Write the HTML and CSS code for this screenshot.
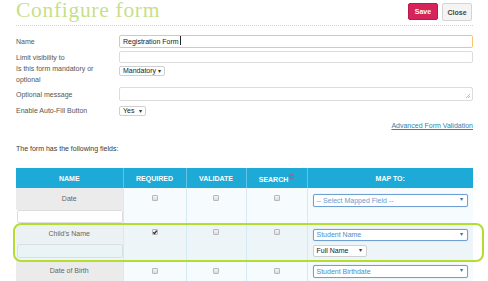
FILE: index.html
```html
<!DOCTYPE html>
<html lang="en">
<head>
<meta charset="utf-8">
<title>Configure form</title>
<link rel="stylesheet" href="styles.css">
</head>
<body>
<div class="page">
  <header class="top">
    <h1 class="title">Configure form</h1>
    <div class="actions">
      <button class="btn btn-save">Save</button>
      <button class="btn btn-close">Close</button>
    </div>
  </header>

  <div class="settings">
    <div class="row r1">
      <label class="lbl">Name</label>
      <div class="field focus">Registration Form<span class="caret"></span></div>
    </div>
    <div class="row r2">
      <label class="lbl">Limit visibility to</label>
      <div class="field h12"></div>
    </div>
    <div class="row r3">
      <label class="lbl two">Is this form mandatory or<br>optional</label>
      <div class="dd dd-mand">Mandatory<span class="arr">▾</span></div>
    </div>
    <div class="row r4">
      <label class="lbl">Optional message</label>
      <div class="field area"><span class="grip"></span></div>
    </div>
    <div class="row r5">
      <label class="lbl">Enable Auto-Fill Button</label>
      <div class="dd dd-yes">Yes<span class="arr">▾</span></div>
    </div>
  </div>

  <div class="link-row"><a class="adv" href="#">Advanced Form Validation</a></div>
  <p class="intro">The form has the following fields:</p>

  <div class="table-wrap">
    <table class="fields">
      <colgroup>
        <col class="c-name"><col class="c-req"><col class="c-val"><col class="c-search"><col class="c-map">
      </colgroup>
      <thead>
        <tr>
          <th>NAME</th>
          <th>REQUIRED</th>
          <th>VALIDATE</th>
          <th>SEARCH<svg class="info" width="5" height="5" viewBox="0 0 10 10"><circle cx="5" cy="5" r="4" fill="none" stroke="#e0415a" stroke-width="1.6"/><rect x="4.2" y="2.4" width="1.6" height="3.4" fill="#e0415a"/><rect x="4.2" y="6.6" width="1.6" height="1.4" fill="#e0415a"/></svg></th>
          <th>MAP TO:</th>
        </tr>
      </thead>
      <tbody>
        <tr class="row-date">
          <td class="name">
            <div class="nlabel">Date</div>
            <div class="ninput"></div>
          </td>
          <td class="chk"><span class="cb"></span></td>
          <td class="chk"><span class="cb"></span></td>
          <td class="chk"><span class="cb"></span></td>
          <td class="map"><div class="mdd placeholder">-- Select Mapped Field --<span class="arr">▾</span></div></td>
        </tr>
        <tr class="row-child">
          <td class="name">
            <div class="nlabel">Child's Name</div>
            <div class="ninput"></div>
          </td>
          <td class="chk"><span class="cb checked"><svg width="6" height="6" viewBox="0 0 6 6"><path d="M1.2 3.4 L2.4 4.6 L4.8 1.6" fill="none" stroke="#222" stroke-width="1.2"/></svg></span></td>
          <td class="chk"><span class="cb"></span></td>
          <td class="chk"><span class="cb"></span></td>
          <td class="map">
            <div class="mdd">Student Name<span class="arr">▾</span></div>
            <div class="sub-dd">Full Name<span class="arr">▾</span></div>
          </td>
        </tr>
        <tr class="row-dob">
          <td class="name">
            <div class="nlabel">Date of Birth</div>
          </td>
          <td class="chk"><span class="cb"></span></td>
          <td class="chk"><span class="cb"></span></td>
          <td class="chk"><span class="cb"></span></td>
          <td class="map"><div class="mdd">Student Birthdate<span class="arr">▾</span></div></td>
        </tr>
      </tbody>
    </table>
    <div class="highlight"></div>
  </div>
</div>
</body>
</html>
```

FILE: styles.css
```css
* { box-sizing: border-box; }
html, body {
  margin: 0;
  padding: 0;
  background: #fff;
}
body {
  width: 488px;
  height: 281px;
  overflow: hidden;
  font-family: "Liberation Sans", Arial, sans-serif;
  font-size: 7px;
  color: #555;
}
.page {
  padding: 0 15px 0 16px;
}

/* header */
.top {
  display: flex;
  justify-content: space-between;
  align-items: flex-start;
  height: 26px;
  border-bottom: 1px dotted #d2d2d2;
}
.title {
  margin: 0;
  font-family: "Liberation Serif", "Times New Roman", serif;
  font-weight: normal;
  font-size: 21.5px;
  line-height: 20px;
  letter-spacing: 0.7px;
  color: #c6df8a;
}
.actions {
  display: flex;
  gap: 4px;
  margin-top: 3px;
  margin-right: 1px;
}
.btn {
  width: 30px;
  height: 17px;
  padding: 0;
  border-radius: 2px;
  font-family: "Liberation Sans", Arial, sans-serif;
  font-size: 7px;
  font-weight: bold;
  cursor: pointer;
}
.btn-save {
  background: #d6245a;
  border: 1px solid #b81b4b;
  color: #fff;
}
.btn-close {
  height: 18px;
  background: #f4f4f4;
  border: 1px solid #d4d4d4;
  color: #444;
}

/* settings form */
.settings {
  margin-top: 9px;
}
.row {
  display: flex;
  align-items: center;
}
.lbl {
  width: 103px;
  flex: none;
  line-height: 11px;
  color: #555;
}
.lbl.two {
  align-self: flex-start;
  margin-top: -3px;
}
.r2 { margin-top: 3px; }
.r3 { margin-top: 3px; align-items: flex-start; }
.r4 { margin-top: 2px; }
.r5 { margin-top: 4px; }

.field {
  flex: 1;
  height: 13px;
  border: 1px solid #dcdcdc;
  border-radius: 2px;
  background: #fff;
  line-height: 11px;
  padding-left: 3px;
  color: #222;
  position: relative;
}
.field.focus {
  border-color: #f6c56e;
}
.field.h12 { height: 12px; }
.field.area { height: 14px; }
.caret {
  display: inline-block;
  width: 1px;
  height: 9px;
  background: #222;
  vertical-align: -1px;
  margin-left: 1px;
}
.grip {
  position: absolute;
  right: 2px;
  bottom: 2px;
  width: 4px;
  height: 4px;
  background: linear-gradient(135deg, transparent 45%, #bbb 45%, #bbb 55%, transparent 55%, transparent 75%, #bbb 75%, #bbb 85%, transparent 85%);
}

.dd {
  height: 10px;
  border: 1px solid #cfcfcf;
  border-radius: 2px;
  background: #fff;
  color: #222;
  line-height: 8px;
  padding: 0 3px 0 3px;
  display: flex;
  justify-content: space-between;
  align-items: center;
}
.dd-mand { width: 46px; }
.dd-yes { width: 27px; }
.arr {
  font-size: 6px;
  color: #333;
  line-height: 8px;
}

.link-row {
  display: flex;
  justify-content: flex-end;
  margin-top: 5px;
  line-height: 9px;
}
.adv {
  color: #2f84ab;
  text-decoration: underline;
}
.intro {
  margin: 14px 0 0 0;
  line-height: 9px;
  color: #3a3a3a;
}

/* table */
.table-wrap {
  position: relative;
  margin-top: 15px;
  width: 457px;
}
.fields {
  width: 457px;
  border-collapse: collapse;
  table-layout: fixed;
}
.c-name { width: 107px; }
.c-req { width: 63px; }
.c-val { width: 60px; }
.c-search { width: 61px; }
.c-map { width: 166px; }

.fields th {
  height: 20px;
  padding: 0;
  background: #1eaad6;
  color: #fff;
  font-size: 7px;
  font-weight: bold;
  text-align: center;
  border-left: 1px solid #62c3e4;
}
.fields th:first-child { border-left: none; }
.info {
  vertical-align: 3px;
  margin-left: 1px;
}

.fields td {
  padding: 0;
  vertical-align: top;
  border-left: 1px solid #d5eaf2;
  background: #f6fbfd;
}
.fields td:first-child { border-left: none; }
.row-date td { height: 36px; }
.row-child td { height: 37px; background: #edf5f8; }
.row-dob td { height: 21px; }

.fields td.name {
  background: #fff;
  color: #666;
  text-align: center;
}
.nlabel {
  height: 22px;
  line-height: 22px;
  background: #ebebeb;
}
.row-dob .nlabel {
  height: 21px;
  line-height: 20px;
}
.row-child .nlabel {
  height: 20px;
  line-height: 19px;
  background: #ecf1f3;
}
.row-child td.name { background: #edf5f8; }
.ninput {
  height: 13px;
  margin-left: 1px;
  border: 1px solid #dedede;
  border-radius: 2px;
  background: #fff;
}
.row-child .ninput {
  height: 14px;
  background: #eaf3f6;
  border-color: #d6dfe2;
}

.chk { text-align: center; }
.cb {
  display: inline-block;
  width: 6px;
  height: 6px;
  margin-top: 7px;
  border: 1px solid #b8b8b8;
  border-radius: 1px;
  background: linear-gradient(#f4f4f4, #dcdcdc);
  position: relative;
}
.row-child .cb { margin-top: 5px; }
.cb.checked svg {
  position: absolute;
  left: -1px;
  top: -1px;
}

.map { padding-left: 5px !important; }
.mdd {
  width: 155px;
  height: 13px;
  margin-top: 6px;
  border: 1px solid #6f9fd3;
  border-radius: 2px;
  background: #fff;
  box-shadow: 0 0 1px rgba(80, 140, 210, 0.5);
  color: #4e8cc8;
  line-height: 11px;
  padding: 0 4px 0 3px;
  display: flex;
  justify-content: space-between;
}
.mdd.placeholder { color: #6a9bd0; }
.mdd .arr { color: #3b6ea5; }
.row-child .mdd { margin-top: 5px; height: 12px; line-height: 10px; }
.sub-dd {
  width: 54px;
  height: 12px;
  margin-top: 4px;
  border: 1px solid #d0d0d0;
  border-radius: 2px;
  background: #fff;
  color: #222;
  line-height: 10px;
  padding: 0 4px 0 3px;
  display: flex;
  justify-content: space-between;
}
.row-dob .mdd { margin-top: 4px; }

.highlight {
  position: absolute;
  left: -3px;
  top: 55px;
  width: 471px;
  height: 39px;
  border: 2px solid #b4de2f;
  border-radius: 8px;
  pointer-events: none;
}
```
